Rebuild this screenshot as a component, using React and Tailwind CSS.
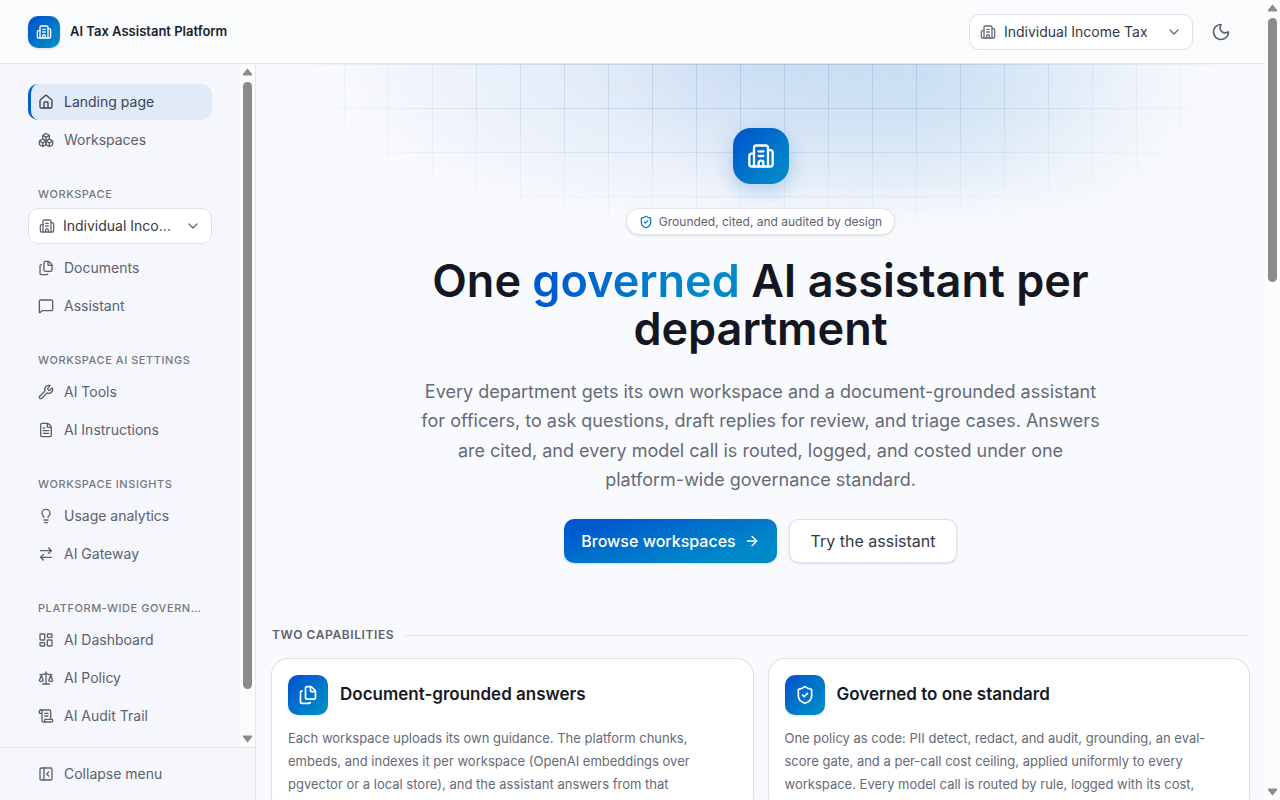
import React from "react";
import {
  ArrowRight,
  ArrowRightLeft,
  Boxes,
  ChevronDown,
  FileText,
  Files,
  House,
  LayoutDashboard,
  Lightbulb,
  MessageSquare,
  Moon,
  PanelLeftClose,
  Scale,
  ScrollText,
  ShieldCheck,
  Wrench,
} from "lucide-react";

function OfficeIcon({ className, strokeWidth = 2 }) {
  return (
    <svg
      viewBox="0 0 24 24"
      fill="none"
      stroke="currentColor"
      strokeWidth={strokeWidth}
      strokeLinecap="round"
      strokeLinejoin="round"
      className={className}
      aria-hidden="true"
    >
      <path d="M10 12h4" />
      <path d="M10 8h4" />
      <path d="M14 21v-3a2 2 0 0 0-4 0v3" />
      <path d="M6 10H4a2 2 0 0 0-2 2v7a2 2 0 0 0 2 2h16a2 2 0 0 0 2-2V9a2 2 0 0 0-2-2h-2" />
      <path d="M6 21V5a2 2 0 0 1 2-2h8a2 2 0 0 1 2 2v16" />
    </svg>
  );
}

const groups = [
  {
    items: [
      { label: "Landing page", icon: House, active: true },
      { label: "Workspaces", icon: Boxes },
    ],
  },
  {
    title: "Workspace",
    picker: true,
    items: [
      { label: "Documents", icon: Files },
      { label: "Assistant", icon: MessageSquare },
    ],
  },
  {
    title: "Workspace AI settings",
    items: [
      { label: "AI Tools", icon: Wrench },
      { label: "AI Instructions", icon: FileText },
    ],
  },
  {
    title: "Workspace insights",
    items: [
      { label: "Usage analytics", icon: Lightbulb },
      { label: "AI Gateway", icon: ArrowRightLeft },
    ],
  },
  {
    title: "Platform-wide governance",
    items: [
      { label: "AI Dashboard", icon: LayoutDashboard },
      { label: "AI Policy", icon: Scale },
      { label: "AI Audit Trail", icon: ScrollText },
    ],
  },
];

function WorkspaceSelect({ label, className }) {
  return (
    <div
      className={`flex h-9 items-center gap-2 rounded-[10px] border border-[#e0e1e8] bg-white px-2.5 ${className}`}
    >
      <OfficeIcon className="size-4 shrink-0 text-[#666a78]" />
      <select
        aria-label={label}
        className="h-6 min-w-0 flex-1 appearance-none truncate bg-transparent text-sm text-[#353846] outline-none"
      >
        <option>Individual Income Tax</option>
      </select>
      <ChevronDown className="size-4 shrink-0 text-[#666a78]" />
    </div>
  );
}

function NavItem({ label, icon: Icon, active }) {
  const tone = active
    ? "border-[#0063cc] bg-[#e1ebf8] text-[#3b4257]"
    : "border-transparent text-[#5d616e]";
  return (
    <a
      href="#"
      aria-current={active ? "page" : undefined}
      className={`flex h-9 items-center gap-2.5 rounded-[10px] border-l-[3px] pr-2.5 pl-[7px] text-sm ${tone}`}
    >
      <Icon className="size-4 shrink-0" />
      <span className="truncate">{label}</span>
    </a>
  );
}

function ScrollTrack({ thumb }) {
  return (
    <div
      className="flex w-[15px] shrink-0 flex-col items-center justify-between bg-[#fcfcfc] py-1"
      aria-hidden="true"
    >
      <svg className="h-2 w-[9px] shrink-0 fill-[#8b8b8b]" viewBox="0 0 9 8">
        <path d="M4.5 0.5 9 6v1.5H0V6z" />
      </svg>
      <div className="flex w-full flex-1 justify-center py-1.5">
        <div className={`w-[9px] rounded-full bg-[#8b8b8b] ${thumb}`} />
      </div>
      <svg className="h-2 w-[9px] shrink-0 fill-[#8b8b8b]" viewBox="0 0 9 8">
        <path d="M4.5 7.5 9 2V0.5H0V2z" />
      </svg>
    </div>
  );
}

function Sidebar() {
  return (
    <aside className="flex w-64 shrink-0 flex-col border-r border-[#e5e7eb] bg-[#f5f7fc]">
      <div className="flex min-h-0 flex-1">
        <nav aria-label="Main" className="flex min-w-0 flex-1 flex-col gap-7 overflow-hidden px-7 pt-5">
          {groups.map((group, index) => (
            <div key={index} className="flex shrink-0 flex-col">
              {group.title && (
                <h2 className="mb-1.5 truncate px-2.5 text-[11px] leading-4 font-medium tracking-wider text-[#747781] uppercase">
                  {group.title}
                </h2>
              )}
              {group.picker && <WorkspaceSelect label="Active workspace" className="mb-1.5" />}
              <div className="flex flex-col gap-0.5">
                {group.items.map((item) => (
                  <NavItem key={item.label} {...item} />
                ))}
              </div>
            </div>
          ))}
        </nav>
        <ScrollTrack thumb="h-[607px]" />
      </div>
      <div className="border-t border-[#e3e5ec] px-7 py-2">
        <button
          type="button"
          className="flex h-9 w-full items-center gap-2.5 px-2.5 text-sm text-[#5d616e]"
        >
          <PanelLeftClose className="size-4 shrink-0" />
          Collapse menu
        </button>
      </div>
    </aside>
  );
}

function Header() {
  return (
    <header className="flex h-16 shrink-0 items-center justify-between border-b border-[#e3e5e9] bg-[#fafbfd] pr-[26px] pl-7">
      <a href="#" className="flex items-center gap-2.5">
        <span className="flex size-8 items-center justify-center rounded-[10px] bg-linear-135 from-[#005acd] from-15% to-[#0089c8] to-85% text-white shadow-sm">
          <OfficeIcon className="size-4" />
        </span>
        <span className="text-[13px] font-semibold text-[#1b1e2b]">AI Tax Assistant Platform</span>
      </a>
      <div className="flex items-center gap-2.5">
        <WorkspaceSelect label="Workspace" className="w-56" />
        <button
          type="button"
          aria-label="Switch to dark mode"
          className="flex size-9 items-center justify-center text-[#5d616e]"
        >
          <Moon className="size-5" />
        </button>
      </div>
    </header>
  );
}

function Hero() {
  return (
    <section className="relative isolate flex flex-col items-center px-4 pt-16 text-center">
      <div
        aria-hidden="true"
        className="absolute inset-x-0 top-0 -z-10 h-[190px] bg-[radial-gradient(42%_90%_at_48%_0%,rgba(0,95,200,0.14),transparent),radial-gradient(30%_95%_at_66%_8%,rgba(0,120,200,0.12),transparent)] mask-[linear-gradient(black_65%,transparent)]"
      />
      <div
        aria-hidden="true"
        className="absolute inset-x-0 top-0 -z-10 h-[190px] bg-[linear-gradient(to_right,rgba(70,120,170,0.2)_1px,transparent_1px),linear-gradient(to_bottom,rgba(70,120,170,0.2)_1px,transparent_1px)] mask-[radial-gradient(52%_95%_at_50%_0%,black_25%,transparent)] bg-size-[44px_44px]"
      />
      <span className="flex size-14 items-center justify-center rounded-[18px] bg-linear-135 from-[#005acd] from-15% to-[#0089c8] to-85% text-white shadow-[0_6px_20px_rgba(0,100,200,0.25)]">
        <OfficeIcon className="size-7" />
      </span>
      <p className="mt-6 flex h-[27px] items-center gap-1.5 rounded-full border border-[#e4e6ec] bg-white px-3 text-xs text-[#5d616e] shadow-sm">
        <ShieldCheck className="size-3.5 text-[#006bcb]" />
        Grounded, cited, and audited by design
      </p>
      <h1 className="mt-[22px] text-[45px] leading-[48px] font-semibold text-[#141722]">
        One{" "}
        <span className="bg-linear-to-r from-[#005acd] from-10% to-[#0089c8] to-80% bg-clip-text text-transparent">
          governed
        </span>{" "}
        AI assistant per
        <br />
        department
      </h1>
      <p className="mt-6 text-lg leading-relaxed text-[#666a77]">
        Every department gets its own workspace and a document-grounded assistant
        <br />
        for officers, to ask questions, draft replies for review, and triage cases. Answers
        <br />
        are cited, and every model call is routed, logged, and costed under one
        <br />
        platform-wide governance standard.
      </p>
      <div className="mt-[25px] flex gap-3 text-base">
        <a
          href="#"
          className="flex h-11 w-[213px] items-center justify-center gap-2 rounded-[10px] bg-linear-165 from-[#005acd] from-15% to-[#0089c8] to-80% font-medium text-white shadow-sm"
        >
          Browse workspaces
          <ArrowRight className="size-4" />
        </a>
        <a
          href="#"
          className="flex h-11 w-42 items-center justify-center rounded-[10px] border border-[#e0e1e8] bg-white text-[#353846] shadow-sm"
        >
          Try the assistant
        </a>
      </div>
    </section>
  );
}

function CapabilityCard({ icon: Icon, title, lines }) {
  return (
    <article className="flex-1 rounded-2xl bg-white p-4 shadow-sm ring-1 ring-[#dfe1e8]">
      <div className="flex items-center gap-3">
        <span className="flex size-10 shrink-0 items-center justify-center rounded-[10px] bg-linear-135 from-[#005acd] from-15% to-[#0089c8] to-85% text-white shadow-sm">
          <Icon className="size-5" />
        </span>
        <h3 className="text-[17px] font-semibold text-[#171a26]">{title}</h3>
      </div>
      <p className="mt-3 text-[13px] leading-[23px] text-[#666a77]">
        {lines.map((line) => (
          <React.Fragment key={line}>
            {line}
            <br />
          </React.Fragment>
        ))}
      </p>
    </article>
  );
}

function Capabilities() {
  return (
    <section className="px-4 pt-16">
      <div className="flex items-center gap-3">
        <h2 className="text-xs leading-4 font-semibold tracking-wider text-[#5d616e] uppercase">
          Two capabilities
        </h2>
        <div className="h-px flex-1 bg-[#dfe1e8]" />
      </div>
      <div className="mt-4 flex gap-4">
        <CapabilityCard
          icon={Files}
          title="Document-grounded answers"
          lines={[
            "Each workspace uploads its own guidance. The platform chunks,",
            "embeds, and indexes it per workspace (OpenAI embeddings over",
            "pgvector or a local store), and the assistant answers from that",
          ]}
        />
        <CapabilityCard
          icon={ShieldCheck}
          title="Governed to one standard"
          lines={[
            "One policy as code: PII detect, redact, and audit, grounding, an eval-",
            "score gate, and a per-call cost ceiling, applied uniformly to every",
            "workspace. Every model call is routed by rule, logged with its cost,",
          ]}
        />
      </div>
    </section>
  );
}

export default function App() {
  return (
    <div className="flex h-screen overflow-hidden bg-[#f9fafd] font-['Inter',sans-serif]">
      <div className="flex min-w-0 flex-1 flex-col">
        <Header />
        <div className="flex min-h-0 flex-1">
          <Sidebar />
          <main className="min-w-0 flex-1 overflow-hidden">
            <Hero />
            <Capabilities />
          </main>
        </div>
      </div>
      <ScrollTrack thumb="h-[264px]" />
    </div>
  );
}
